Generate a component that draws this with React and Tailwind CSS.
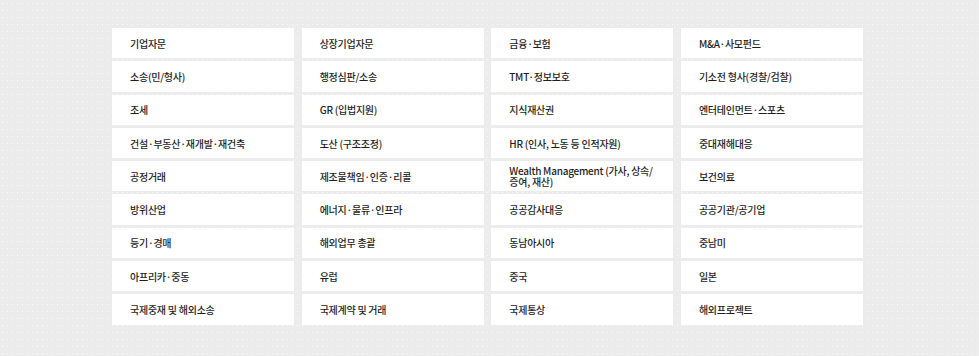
const practices = [
  ["기업자문", "상장기업자문", "금융·보험", "M&A·사모펀드"],
  ["소송(민/형사)", "행정심판/소송", "TMT·정보보호", "기소전 형사(경찰/검찰)"],
  ["조세", "GR (입법지원)", "지식재산권", "엔터테인먼트·스포츠"],
  ["건설·부동산·재개발·재건축", "도산 (구조조정)", "HR (인사, 노동 등 인적자원)", "중대재해대응"],
  ["공정거래", "제조물책임·인증·리콜", "Wealth Management (가사, 상속/ 증여, 재산)", "보건의료"],
  ["방위산업", "에너지·물류·인프라", "공공감사대응", "공공기관/공기업"],
  ["등기·경매", "해외업무 총괄", "동남아시아", "중남미"],
  ["아프리카·중동", "유럽", "중국", "일본"],
  ["국제중재 및 해외소송", "국제계약 및 거래", "국제통상", "해외프로젝트"],
];

export default function App() {
  return (
    <div className="w-[979px] h-[356px] overflow-hidden bg-[#ececec] bg-[radial-gradient(circle,rgba(255,255,255,0.75)_0.6px,transparent_0.8px)] bg-[size:5px_7px] font-['Noto_Sans_CJK_KR','Noto_Sans',sans-serif]">
      <div className="pl-[112px] pt-[28px]">
        <ul className="w-[751px] grid grid-cols-4 gap-x-[7.5px] gap-y-[3px]">
          {practices.flat().map((name) => (
            <li
              key={name}
              className="h-[30.3px] bg-white flex items-center pl-[18px] pr-[14px] text-[10px] leading-[11px] font-medium tracking-[-0.25px] text-[#1e1e1e]"
            >
              {name}
            </li>
          ))}
        </ul>
      </div>
    </div>
  );
}
